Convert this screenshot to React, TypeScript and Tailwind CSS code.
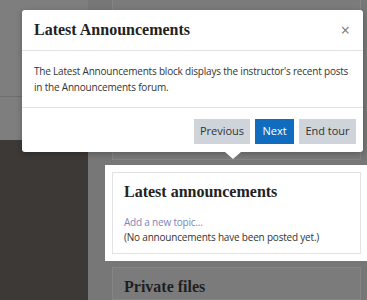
import React from 'react';

const serif = "font-['Liberation_Serif','DejaVu_Serif',serif]";
const sans = "font-['Open_Sans','Noto_Sans',sans-serif]";

const TourPopover: React.FC = () => (
    <div className="absolute left-[22px] top-[10px] w-[341px] h-[142px] bg-white rounded-[3px] shadow-[0_2px_6px_rgba(0,0,0,0.25)] flex flex-col">
        <div className="h-[41px] px-3 flex items-center justify-between border-b border-[#e3e3e3]">
            <h3 className={`${serif} font-bold text-[16px] text-[#222]`}>Latest Announcements</h3>
            <button className={`${sans} text-[16px] leading-none text-[#777] mr-[1px]`} aria-label="Close">×</button>
        </div>
        <div className={`${sans} px-3 py-3 text-[10px] tracking-[-0.2px] leading-[16px] text-[#333] border-b border-[#e3e3e3]`}>
            The Latest Announcements block displays the instructor's recent posts in the Announcements forum.
        </div>
        <div className={`${sans} flex justify-end gap-[5px] pt-[11px] pr-[7px] text-[11px]`}>
            <button className="w-[56px] h-[25px] bg-[#ced4da] text-[#333]">Previous</button>
            <button className="w-[39px] h-[25px] bg-[#0f6cbf] text-white">Next</button>
            <button className="w-[57px] h-[25px] bg-[#ced4da] text-[#333]">End tour</button>
        </div>
        <div className="absolute left-[203px] -bottom-[7px] w-0 h-0 border-x-[8px] border-x-transparent border-t-[7px] border-t-white" />
    </div>
);

const App: React.FC = () => {
    return (
        <div className="relative w-[367px] h-[300px] overflow-hidden bg-[#777] flex">
            <div className="w-[88px] flex flex-col shrink-0">
                <div className="h-[140px] bg-[#7e7e7e] flex flex-col">
                    <div className="h-[97px] border-b border-[#6f6f6f]" />
                </div>
                <div className="flex-1 bg-[#3d3936]" />
            </div>
            <div className="flex-1 pl-[24px] pr-[6px] flex flex-col">
                <div className="h-[160px] bg-[#7b7b7b] border-x border-b border-[#858585] shrink-0" />
                <div className="mt-[5px] -ml-[7px] -mr-[7px] p-[7px] bg-white shrink-0">
                    <div className="h-[82px] border border-[#e2e2e2] px-[11px] pt-[8px]">
                        <h4 className={`${serif} font-bold text-[16px] text-[#222] leading-[22px]`}>Latest announcements</h4>
                        <div className={`${sans} mt-[12px] text-[10px] tracking-[-0.2px] leading-[15px]`}>
                            <div className="text-[#7b85bb]">Add a new topic...</div>
                            <div className="text-[#333]">(No announcements have been posted yet.)</div>
                        </div>
                    </div>
                </div>
                <div className="mt-[6px] flex-1 bg-[#7b7b7b] border border-[#858585] px-[11px] pt-[8px] shrink-0">
                    <h4 className={`${serif} font-bold text-[16px] text-[#1f1f1f] leading-[22px]`}>Private files</h4>
                </div>
            </div>
            <TourPopover />
        </div>
    );
};

export default App;
